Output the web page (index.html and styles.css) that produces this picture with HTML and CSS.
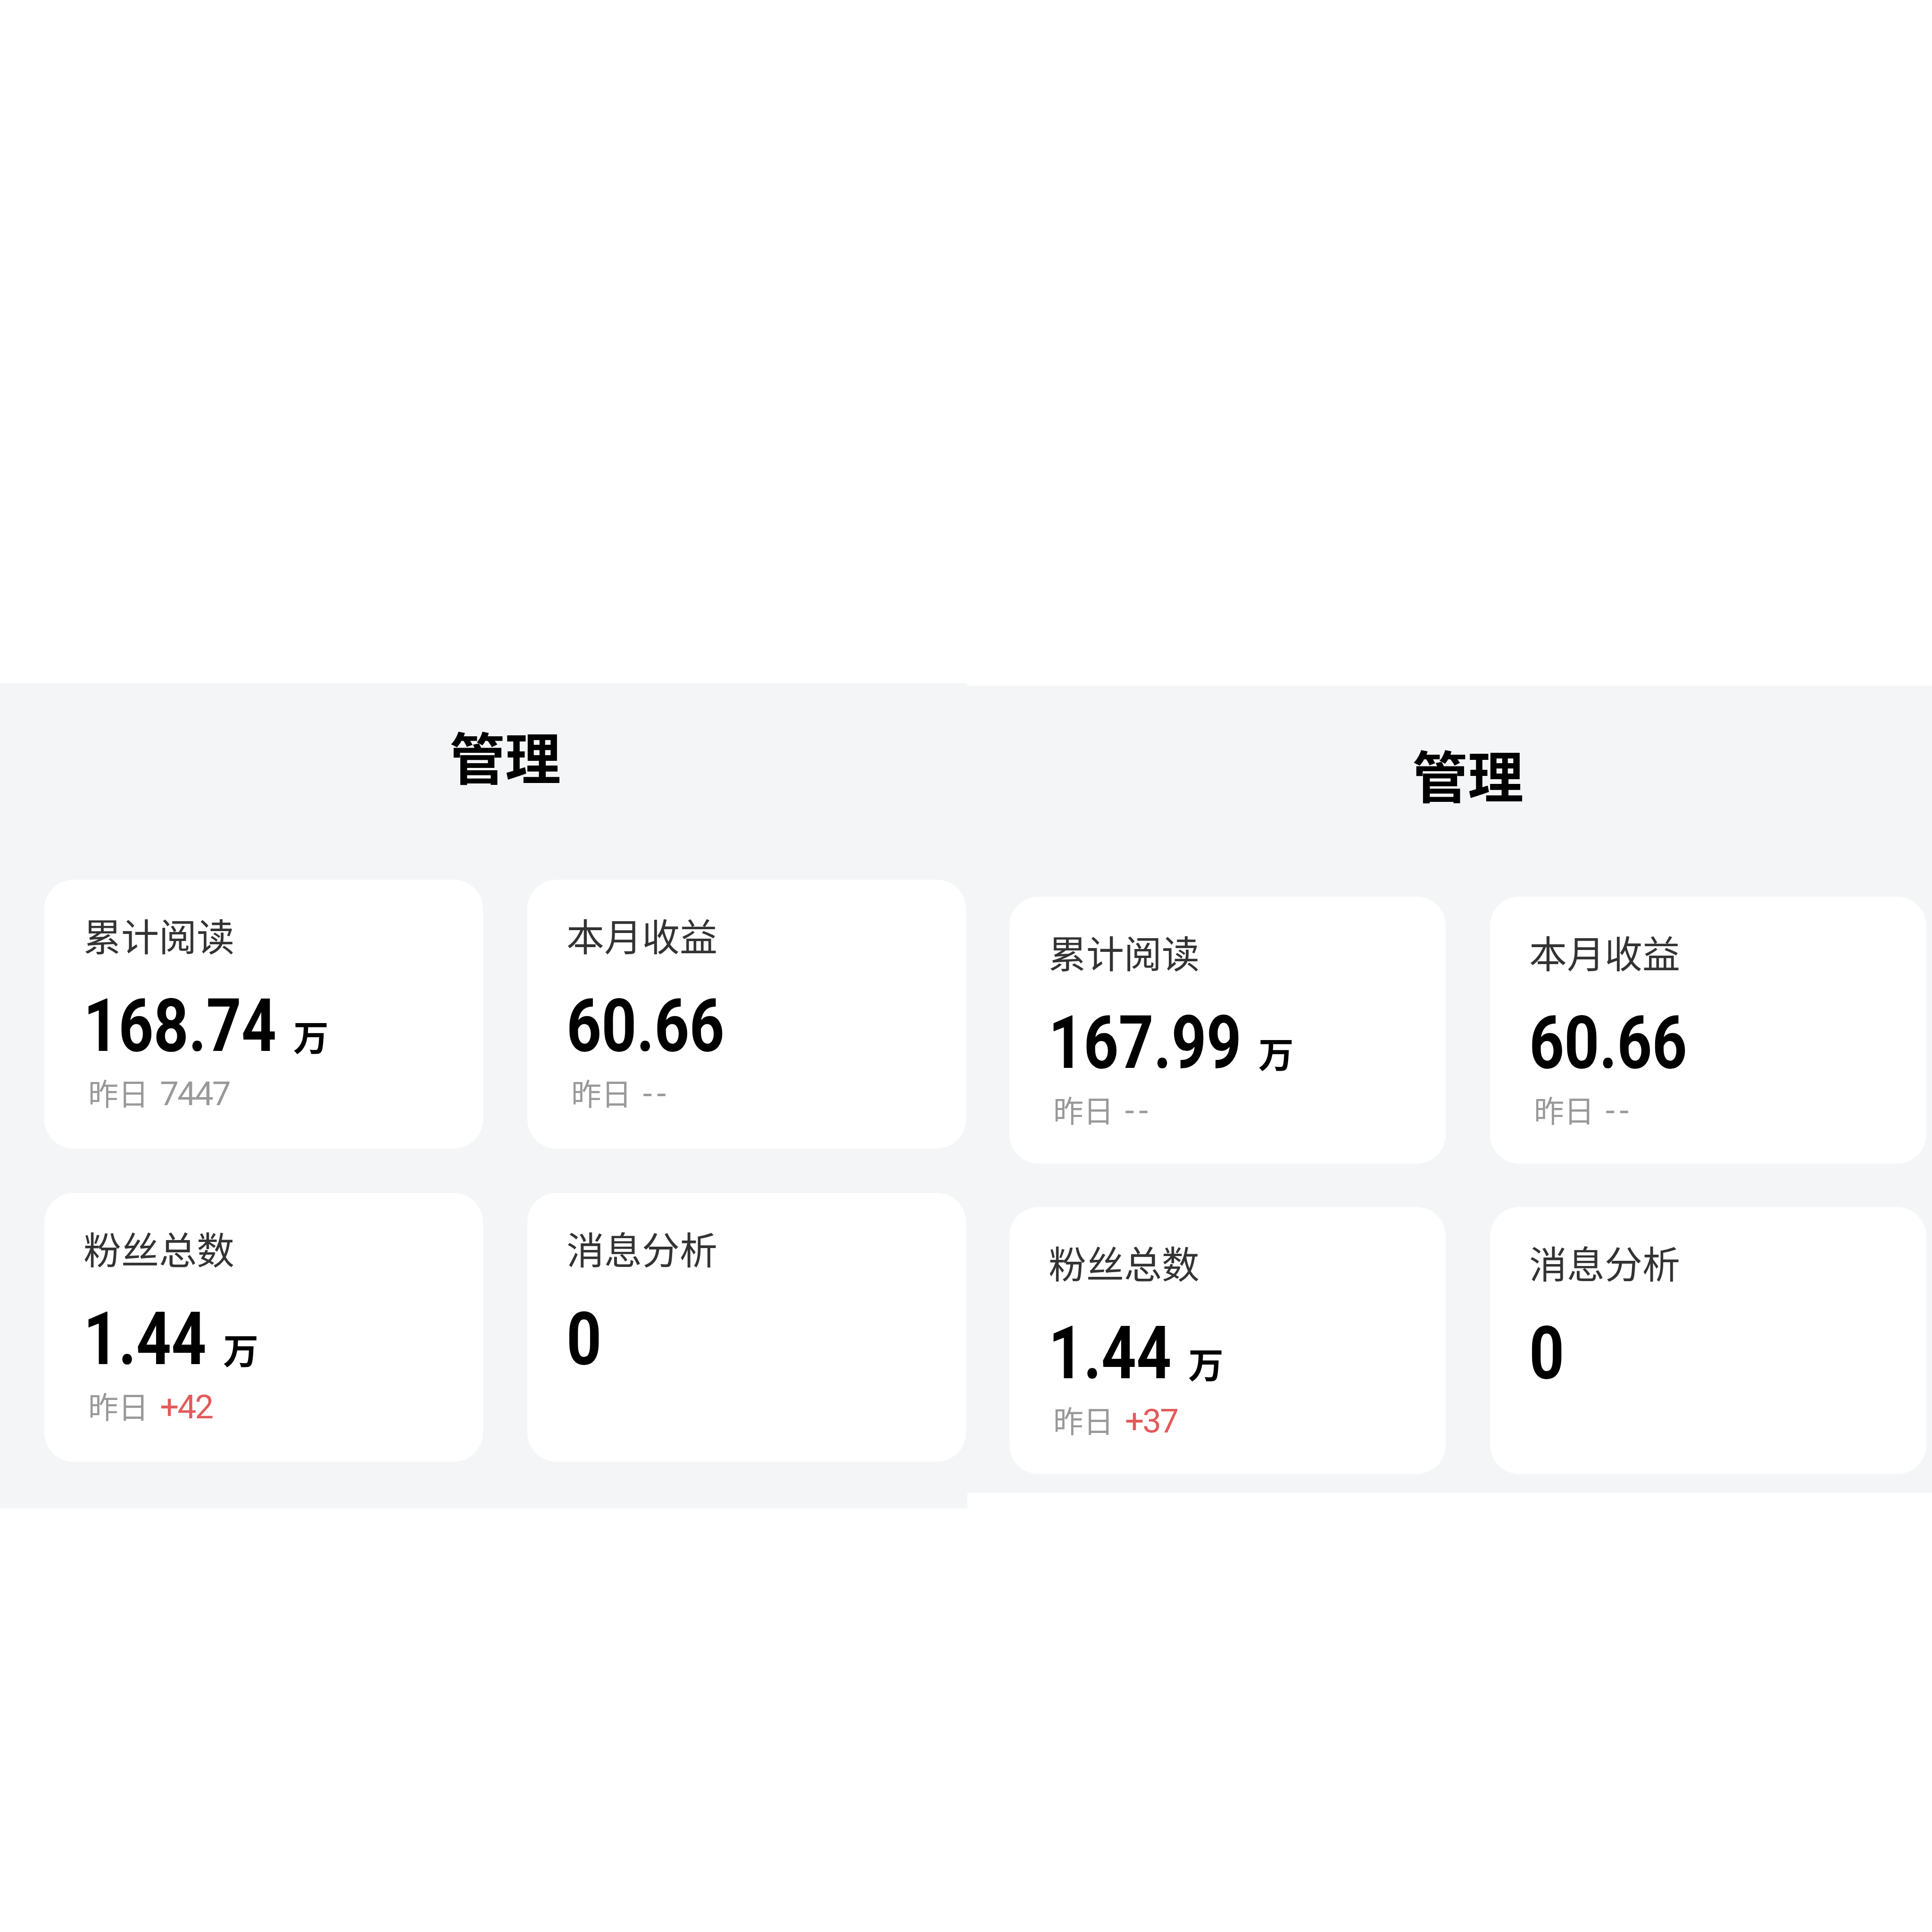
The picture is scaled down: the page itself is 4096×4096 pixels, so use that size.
FILE: index.html
```html
<!DOCTYPE html>
<html lang="zh-CN">
<head>
    <meta charset="UTF-8">
    <meta name="viewport" content="width=device-width, initial-scale=1.0">
    <title>管理</title>
    <link rel="stylesheet" href="styles.css">
</head>
<body>
    <div class="compare">
        <section class="panel panel-old">
            <h1 class="panel-title">管理</h1>
            <div class="cards">
                <div class="card">
                    <div class="card-label">累计阅读</div>
                    <div class="card-value">168.74<span class="unit">万</span></div>
                    <div class="card-sub">昨日<span class="num">7447</span></div>
                </div>
                <div class="card">
                    <div class="card-label">本月收益</div>
                    <div class="card-value">60.66</div>
                    <div class="card-sub">昨日<span class="num none">--</span></div>
                </div>
                <div class="card">
                    <div class="card-label">粉丝总数</div>
                    <div class="card-value">1.44<span class="unit">万</span></div>
                    <div class="card-sub">昨日<span class="num up">+42</span></div>
                </div>
                <div class="card">
                    <div class="card-label">消息分析</div>
                    <div class="card-value">0</div>
                </div>
            </div>
        </section>

        <section class="panel panel-new">
            <h1 class="panel-title">管理</h1>
            <div class="cards">
                <div class="card">
                    <div class="card-label">累计阅读</div>
                    <div class="card-value">167.99<span class="unit">万</span></div>
                    <div class="card-sub">昨日<span class="num none">--</span></div>
                </div>
                <div class="card">
                    <div class="card-label">本月收益</div>
                    <div class="card-value">60.66</div>
                    <div class="card-sub">昨日<span class="num none">--</span></div>
                </div>
                <div class="card">
                    <div class="card-label">粉丝总数</div>
                    <div class="card-value">1.44<span class="unit">万</span></div>
                    <div class="card-sub">昨日<span class="num up">+37</span></div>
                </div>
                <div class="card">
                    <div class="card-label">消息分析</div>
                    <div class="card-value">0</div>
                </div>
            </div>
        </section>
    </div>
</body>
</html>
```

FILE: styles.css
```css
body {
    margin: 0;
    background: #ffffff;
    font-family: "Noto Sans CJK SC", "Noto Sans", sans-serif;
    color: #333333;
}
.compare {
    display: flex;
    align-items: flex-start;
    padding-top: 1448px;
}
.panel {
    box-sizing: border-box;
    background: #f4f5f7;
}
.panel-old {
    width: 2051px;
    padding: 95px 3px 99px 94px;
}
.panel-new {
    width: 2045px;
    margin-top: 6px;
    padding: 128px 12px 40px 89px;
}
.panel-title {
    margin: 0 0 204px;
    font-size: 118px;
    line-height: 1;
    font-weight: 700;
    color: #000000;
    text-align: center;
}
.panel-new .panel-title {
    margin-bottom: 201px;
}
.cards {
    display: grid;
    grid-template-columns: 930px 930px;
    grid-auto-rows: 570px;
    gap: 94px;
}
.panel-new .cards {
    grid-template-columns: 925px 925px;
    grid-auto-rows: 566px;
    gap: 92px 94px;
}
.card {
    box-sizing: border-box;
    background: #ffffff;
    border-radius: 62px;
    padding: 76px 40px 0 83px;
}
.card-label {
    font-size: 80px;
    line-height: 1;
    color: #333333;
}
/* digits are narrowed to get close to the DIN look of the app */
.card-value {
    margin-top: 76px;
    font-family: Roboto, "Liberation Sans", sans-serif;
    font-size: 156px;
    line-height: 1;
    font-weight: 700;
    color: #000000;
    transform: scaleX(0.83);
    transform-origin: left center;
}
.unit {
    display: inline-block;
    margin-left: 43px;
    font-family: "Noto Sans CJK SC", sans-serif;
    font-size: 75px;
    font-weight: 700;
    transform: scaleX(1.2);
    transform-origin: left bottom;
}
.card-sub {
    margin-top: 30px;
    padding-left: 10px;
    font-size: 64px;
    line-height: 1;
    color: #999999;
}
.num {
    margin-left: 24px;
    font-family: Roboto, "Liberation Sans", sans-serif;
    font-size: 71px;
    letter-spacing: -3px;
    line-height: 1;
}
.num.none {
    letter-spacing: 10px;
}
.num.up {
    color: #e35a5a;
}
```
